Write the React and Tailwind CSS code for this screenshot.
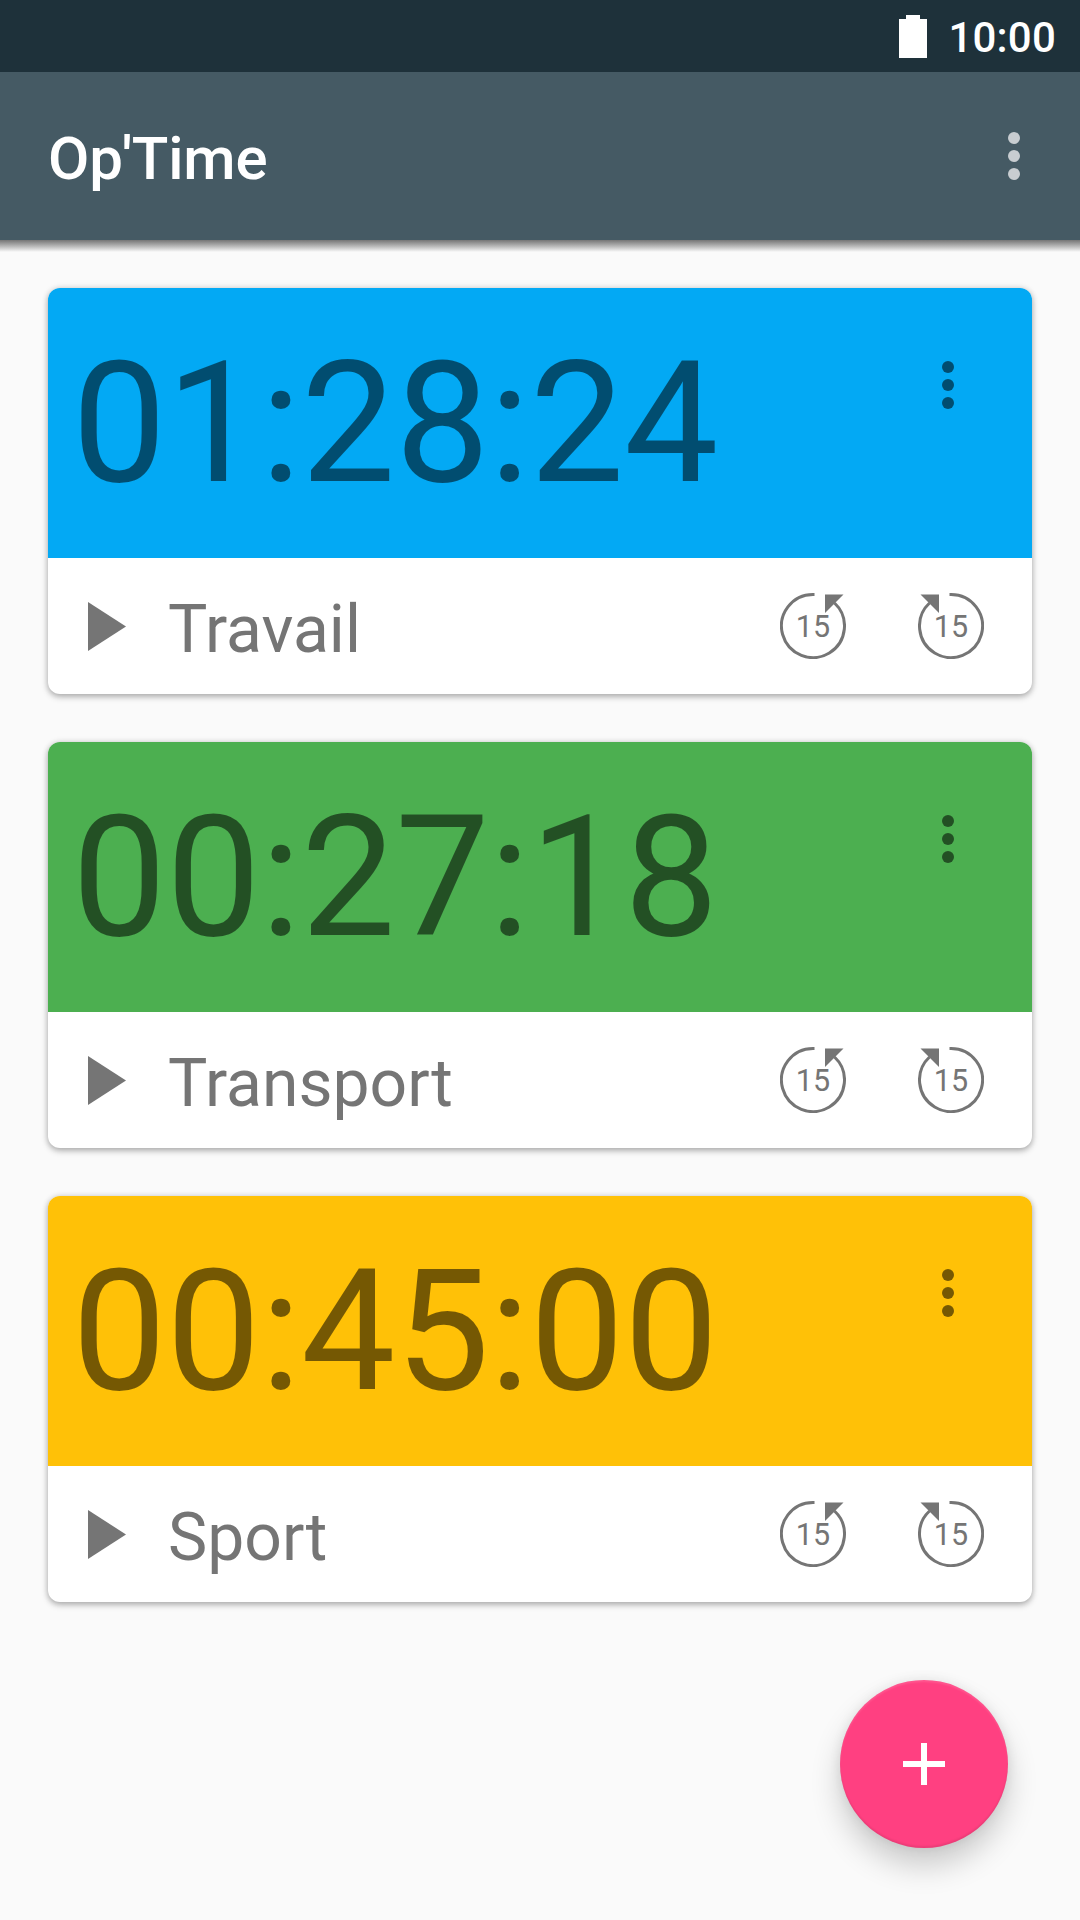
const timers = [
  { time: '01:28:24', name: 'Travail', tone: 'bg-[#03a9f4]' },
  { time: '00:27:18', name: 'Transport', tone: 'bg-[#4caf50]' },
  { time: '00:45:00', name: 'Sport', tone: 'bg-[#ffc107]' },
];

function Dots({ className }) {
  return (
    <svg className={className} width="12" height="48" viewBox="0 0 12 48" fill="currentColor">
      <circle cx="6" cy="6" r="6" />
      <circle cx="6" cy="24" r="6" />
      <circle cx="6" cy="42" r="6" />
    </svg>
  );
}

function Skip({ back, label }) {
  return (
    <button aria-label={label} className="relative flex h-[66px] w-[66px] items-center justify-center">
      <svg className="absolute inset-0" width="66" height="66" viewBox="0 0 66 66">
        <g transform={back ? 'translate(66 0) scale(-1 1)' : undefined}>
          <path d="M34.5 1.5H33A31.5 31.5 0 1 0 54.5 10" fill="none" stroke="#757575" strokeWidth="3" />
          <path d="M45 1.5H63.5L45 20Z" fill="#757575" />
        </g>
      </svg>
      <span className="relative pt-[2px] text-[30.5px] leading-none text-[#757575]">15</span>
    </button>
  );
}

function Card({ time, name, tone }) {
  return (
    <section className="h-[406px] overflow-hidden rounded-[12px] bg-white shadow-[0_3px_6px_rgba(0,0,0,0.26),0_0_6px_rgba(0,0,0,0.14)]">
      <div className={'flex h-[270px] items-center justify-between pl-6 ' + tone}>
        <span className="pt-[2px] text-[168px] leading-none tracking-[-0.2px] text-black/[0.54]">{time}</span>
        <Dots className="mr-[78px] mb-[76px] text-black/[0.54]" />
      </div>
      <div className="flex h-[136px] items-center pr-12 pl-10">
        <svg width="38" height="49" viewBox="0 0 38 49">
          <path d="M0 0V49L38 24.5Z" fill="#757575" />
        </svg>
        <span className="ml-[42px] grow pt-[7px] text-[66px] leading-none text-[#757575]">{name}</span>
        <div className="flex gap-[72px]">
          <Skip label="+15" />
          <Skip back label="-15" />
        </div>
      </div>
    </section>
  );
}

export default function App() {
  return (
    <div className="relative flex h-[1920px] w-[1080px] flex-col bg-[#fafafa] font-['Roboto',sans-serif]">
      <div className="flex h-[72px] items-center justify-end bg-[#1e313a] pr-6 text-white">
        <svg width="28" height="43" viewBox="0 0 28 43" fill="currentColor">
          <path d="M7 0H21V4H28V43H0V4H7Z" />
        </svg>
        <span className="ml-[21px] pt-[3px] text-[42px] leading-none font-medium tracking-[0.2px]">10:00</span>
      </div>
      <header className="flex h-[168px] items-center justify-between bg-[#455a64] pr-[60px] pl-12">
        <h1 className="pt-[6px] text-[60px] leading-none font-medium tracking-[-0.15px] text-white">Op'Time</h1>
        <Dots className="text-[#c8cdd1]" />
      </header>
      <div className="h-3 bg-linear-to-b from-[#757575] to-[#fafafa]" />
      <main className="flex flex-col gap-12 px-12 pt-9">
        {timers.map((t) => (
          <Card key={t.name} {...t} />
        ))}
      </main>
      <button
        aria-label="+"
        className="absolute right-[72px] bottom-[72px] flex h-[168px] w-[168px] items-center justify-center rounded-full bg-[#ff4081] shadow-[0_18px_30px_rgba(0,0,0,0.19),0_0_12px_rgba(0,0,0,0.08),inset_0_2px_2px_rgba(255,255,255,0.12),inset_0_-2px_2px_rgba(0,0,0,0.08)]"
      >
        <svg width="42" height="42" viewBox="0 0 42 42" fill="#fff">
          <path d="M18 0H24V18H42V24H24V42H18V24H0V18H18Z" />
        </svg>
      </button>
    </div>
  );
}
